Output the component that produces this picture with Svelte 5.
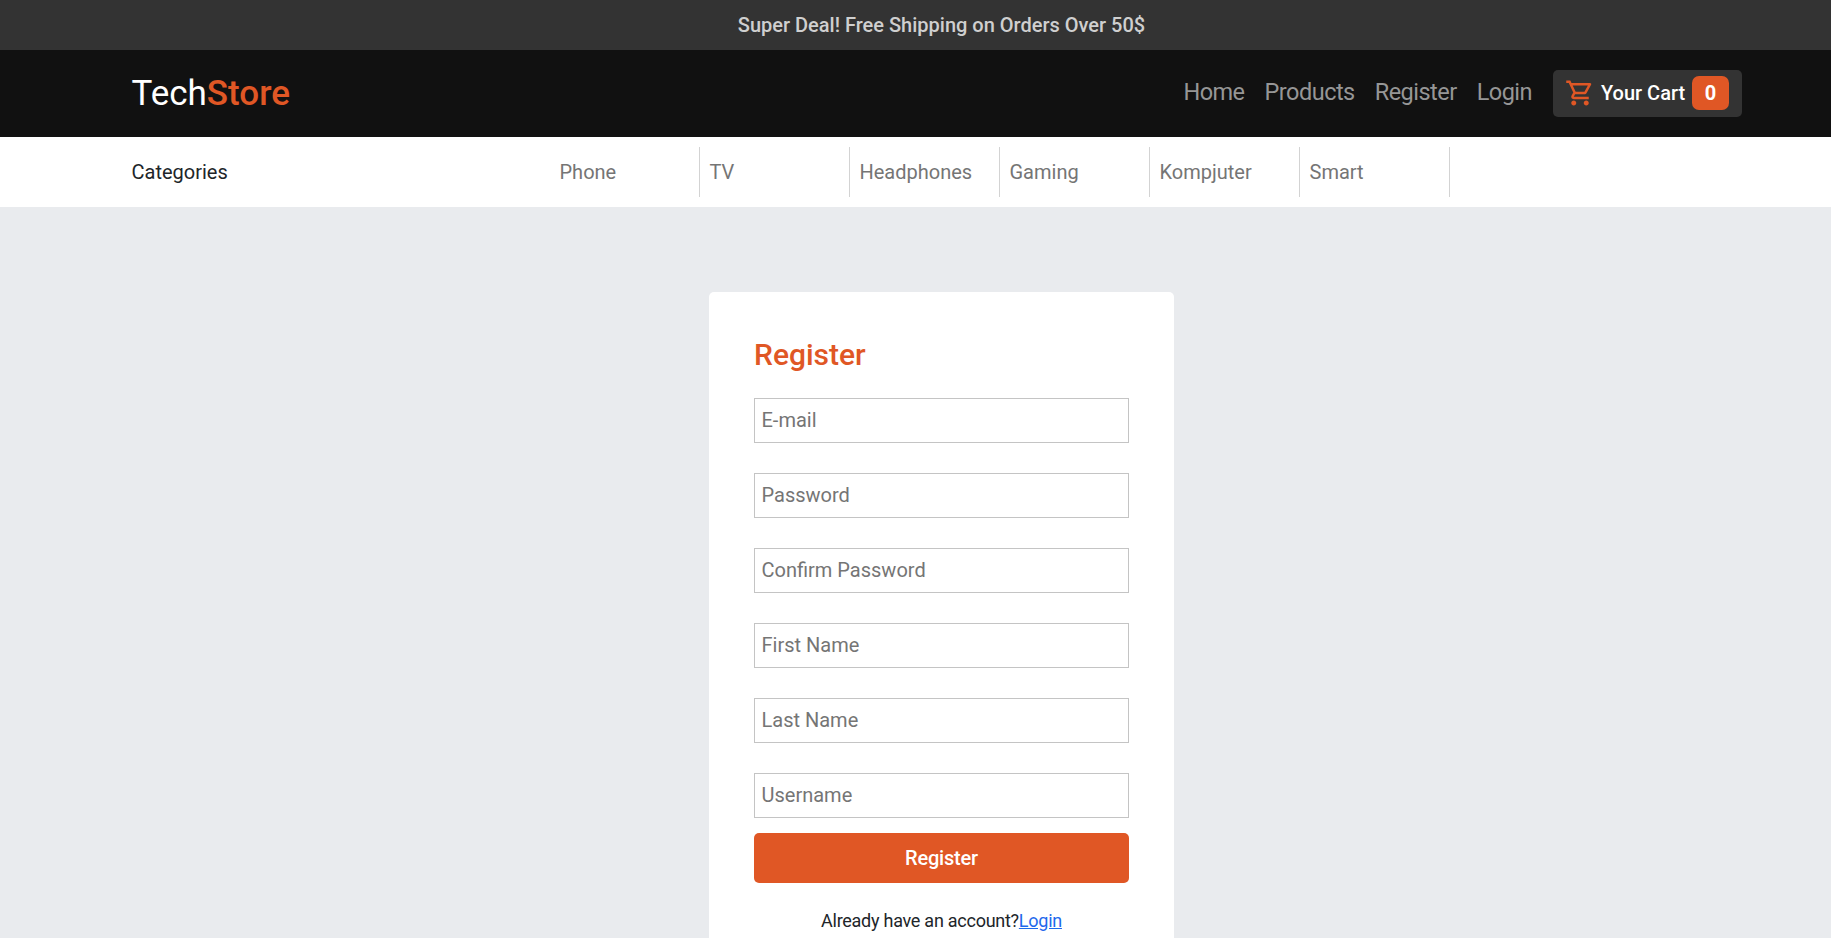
<script>
  const nav = ['Home', 'Products', 'Register', 'Login'];
  const categories = ['Phone', 'TV', 'Headphones', 'Gaming', 'Kompjuter', 'Smart'];
  const fields = [
    ['E-mail', 'email'],
    ['Password', 'password'],
    ['Confirm Password', 'password'],
    ['First Name', 'text'],
    ['Last Name', 'text'],
    ['Username', 'text']
  ];
</script>

<div class="page">
  <div class="deal">Super Deal! Free Shipping on Orders Over 50$</div>
  <header>
    <a class="brand" href="#home">Tech<span>Store</span></a>
    <nav>
      {#each nav as item}<a href="#{item}">{item}</a>{/each}
      <button class="cart">
        <svg viewBox="0 0 24 24" width="30" height="30" fill="currentColor"><path d="M15.55 13c.75 0 1.41-.41 1.75-1.03l3.58-6.49A.996.996 0 0 0 20.01 4H5.21l-.94-2H1v2h2l3.6 7.59-1.35 2.44C4.52 15.37 5.48 17 7 17h12v-2H7l1.1-2h7.45zM6.16 6h12.15l-2.76 5H8.53L6.16 6zM7 18c-1.1 0-1.99.9-1.99 2S5.9 22 7 22s2-.9 2-2-.9-2-2-2zm10 0c-1.1 0-1.99.9-1.99 2s.89 2 1.99 2 2-.9 2-2-.9-2-2-2z"/></svg>
        <span>Your Cart</span><b>0</b>
      </button>
    </nav>
  </header>
  <div class="categories">
    <span class="title">Categories</span>
    <div class="list">
      {#each categories as item}<a href="#{item}">{item}</a>{/each}
    </div>
  </div>
  <main>
    <form>
      <h1>Register</h1>
      {#each fields as [label, type]}<input {type} placeholder={label} />{/each}
      <button type="button" class="submit">Register</button>
      <p>Already have an account?<a href="#login">Login</a></p>
    </form>
  </main>
</div>

<style>
  :global(body) { overflow: hidden; }
  * { box-sizing: border-box; }
  .page { height: 938px; overflow: hidden; background: #e9ebee; font-family: Roboto, sans-serif; font-size: 20px; line-height: 30px; color: #212529; display: flex; flex-direction: column; }
  a { text-decoration: none; color: inherit; }
  button { font-family: inherit; border: 0; }
  .deal { flex: none; height: 50px; padding-top: 10px; padding-left: 52px; background: #333; color: #cfcfcf; font-weight: 500; text-align: center; }
  header { flex: none; height: 87px; background: #111; padding: 0 89px 0 131.5px; display: flex; justify-content: space-between; align-items: center; }
  .brand { color: #fff; font-size: 35px; line-height: 50px; }
  .brand span { color: #e05725; font-weight: 500; }
  nav { display: flex; align-items: center; gap: 20px; color: #969696; font-size: 23.5px; }
  nav a { padding-bottom: 3px; letter-spacing: -.52px; }
  nav a:nth-child(4) { margin-right: 1px; }
  .cart { display: flex; align-items: flex-start; width: 189px; height: 47px; padding: 6px 13px 0 12px; border-radius: 5px; background: #333; color: #fff; font-size: 20px; font-weight: 500; }
  .cart svg { color: #e05725; margin: 2px 6px 0 0; flex: none; }
  .cart span { white-space: nowrap; line-height: 34px; }
  .cart b { margin-left: auto; width: 37px; height: 34px; line-height: 34px; border-radius: 7px; background: #e05725; font-weight: 700; }
  .categories { flex: none; height: 70px; background: #fff; display: flex; align-items: center; padding-left: 131.5px; }
  .title { width: 418.5px; }
  .list { display: flex; color: #757575; }
  .list a { width: 150px; height: 50px; line-height: 50px; padding-left: 9.5px; border-right: 1px solid #d3d3d3; }
  main { flex: none; padding: 85px 0 0 52px; display: flex; justify-content: center; }
  form { width: 465px; height: 700px; padding: 45px; border-radius: 5px; background: #fff; display: flex; flex-direction: column; }
  h1 { margin: 0 0 25px; font-size: 30px; line-height: 36px; font-weight: 500; color: #e05725; }
  input { flex: none; width: 375px; height: 45px; margin: 0 0 30px; padding: 0 6.5px 1px; border: 1px solid #c4c4c4; border-radius: 0; font-family: inherit; font-size: 20px; }
  input::placeholder { color: #757575; opacity: 1; }
  .submit { flex: none; height: 50px; margin-top: -15px; border-radius: 5px; background: #e05725; color: #fff; font-size: 20px; font-weight: 500; letter-spacing: -.2px; }
  p { margin: 23px 0 0; text-align: center; font-size: 18px; line-height: 30px; letter-spacing: -.26px; }
  p a { color: #1f69ec; text-decoration: underline; }
</style>
